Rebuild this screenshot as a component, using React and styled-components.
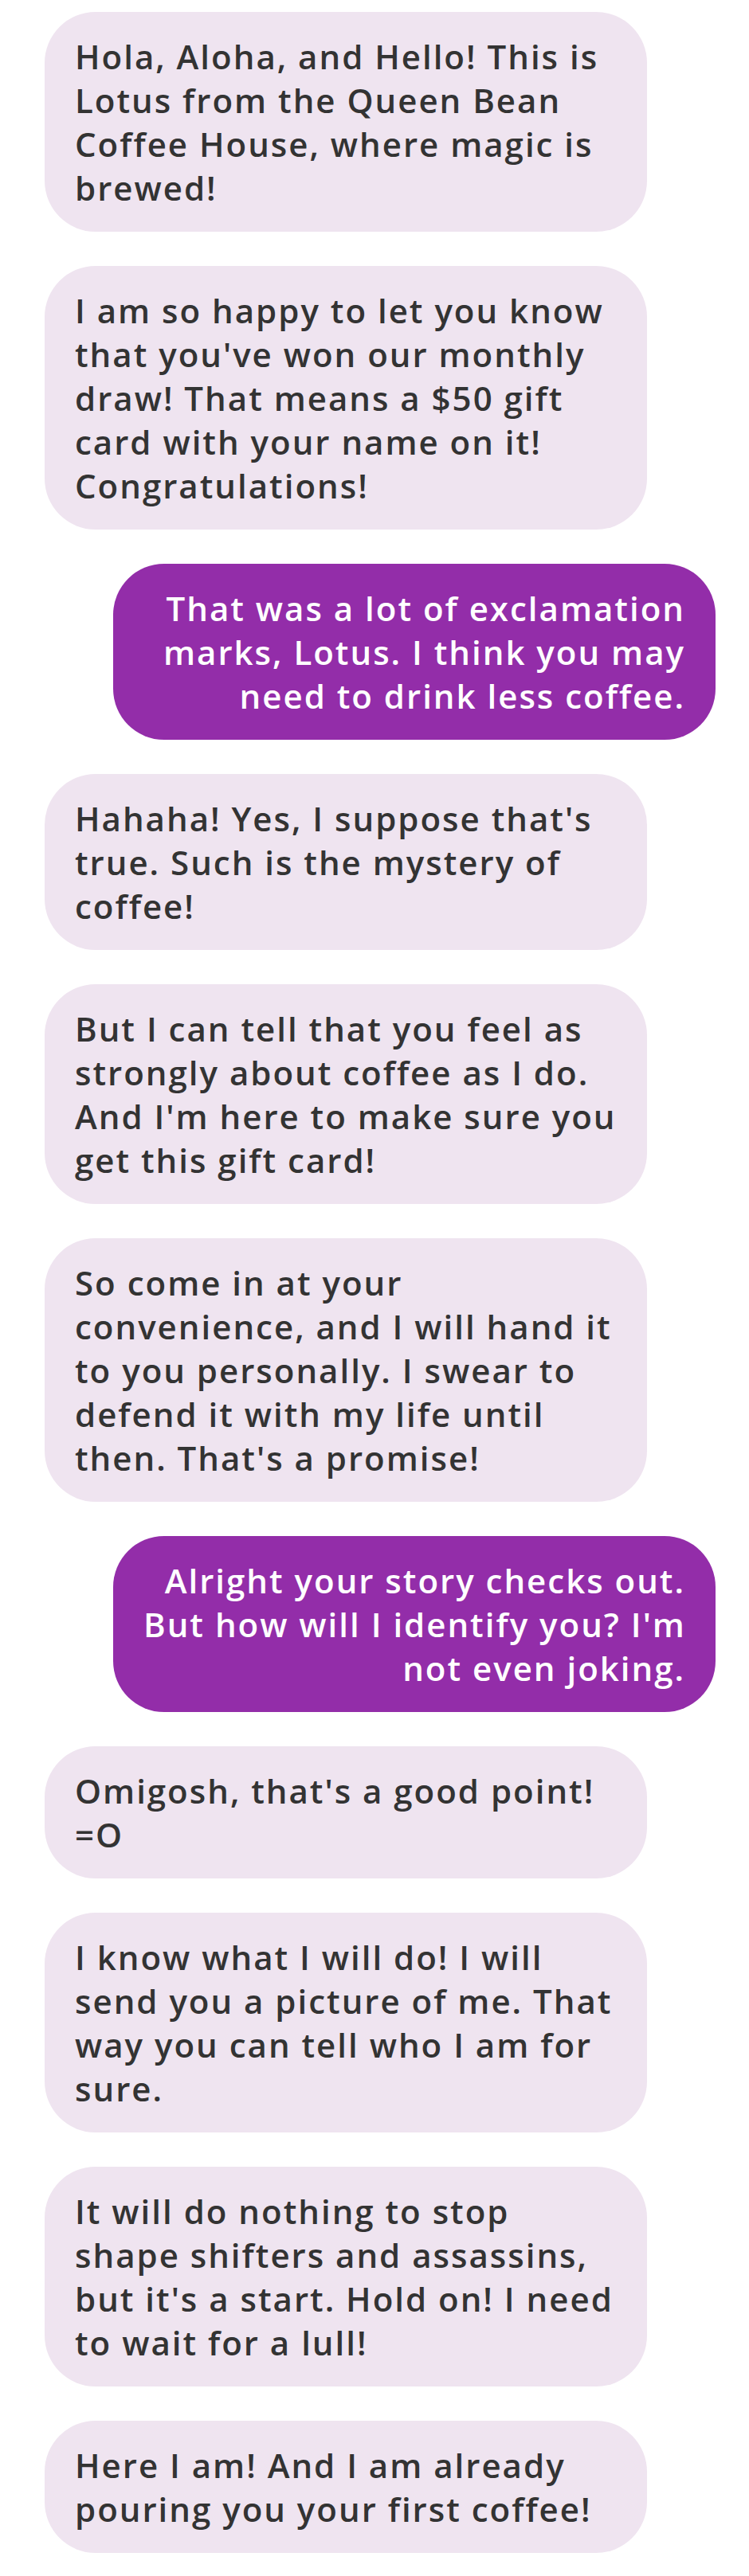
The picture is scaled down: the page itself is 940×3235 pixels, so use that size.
import React from "react";
import styled, { createGlobalStyle } from "styled-components";

const Global = createGlobalStyle`
  html, body { margin: 0; padding: 0; background: #ffffff; }
  body { font-family: "Open Sans", "Noto Sans", sans-serif; }
`;

const Thread = styled.div`
  display: flex;
  flex-direction: column;
  gap: 43px;
  padding: 15px 42px 29px 56px;
`;

const Bubble = styled.div`
  box-sizing: border-box;
  width: 756px;
  padding: 28px 38px;
  border-radius: 64px;
  font-family: "Open Sans", "Noto Sans", sans-serif;
  font-weight: 600;
  font-size: 42px;
  line-height: 55px;
  letter-spacing: 2px;
  white-space: nowrap;
  align-self: ${(p) => (p.$sent ? "flex-end" : "flex-start")};
  text-align: ${(p) => (p.$sent ? "right" : "left")};
  background: ${(p) => (p.$sent ? "#932da9" : "#efe4f0")};
  color: ${(p) => (p.$sent ? "#ffffff" : "#333333")};
`;

const Line = styled.span`
  display: block;
`;

const messages = [
  { sent: false, lines: ["Hola, Aloha, and Hello! This is", "Lotus from the Queen Bean", "Coffee House, where magic is", "brewed!"] },
  { sent: false, lines: ["I am so happy to let you know", "that you've won our monthly", "draw! That means a $50 gift", "card with your name on it!", "Congratulations!"] },
  { sent: true, lines: ["That was a lot of exclamation", "marks, Lotus. I think you may", "need to drink less coffee."] },
  { sent: false, lines: ["Hahaha! Yes, I suppose that's", "true. Such is the mystery of", "coffee!"] },
  { sent: false, lines: ["But I can tell that you feel as", "strongly about coffee as I do.", "And I'm here to make sure you", "get this gift card!"] },
  { sent: false, lines: ["So come in at your", "convenience, and I will hand it", "to you personally. I swear to", "defend it with my life until", "then. That's a promise!"] },
  { sent: true, lines: ["Alright your story checks out.", "But how will I identify you? I'm", "not even joking."] },
  { sent: false, lines: ["Omigosh, that's a good point!", "=O"] },
  { sent: false, lines: ["I know what I will do! I will", "send you a picture of me. That", "way you can tell who I am for", "sure."] },
  { sent: false, lines: ["It will do nothing to stop", "shape shifters and assassins,", "but it's a start. Hold on! I need", "to wait for a lull!"] },
  { sent: false, lines: ["Here I am! And I am already", "pouring you your first coffee!"] },
];

export default function App() {
  return (
    <>
      <Global />
      <Thread>
        {messages.map((m, i) => (
          <Bubble key={i} $sent={m.sent}>
            {m.lines.map((l, j) => (
              <Line key={j}>{l}</Line>
            ))}
          </Bubble>
        ))}
      </Thread>
    </>
  );
}
